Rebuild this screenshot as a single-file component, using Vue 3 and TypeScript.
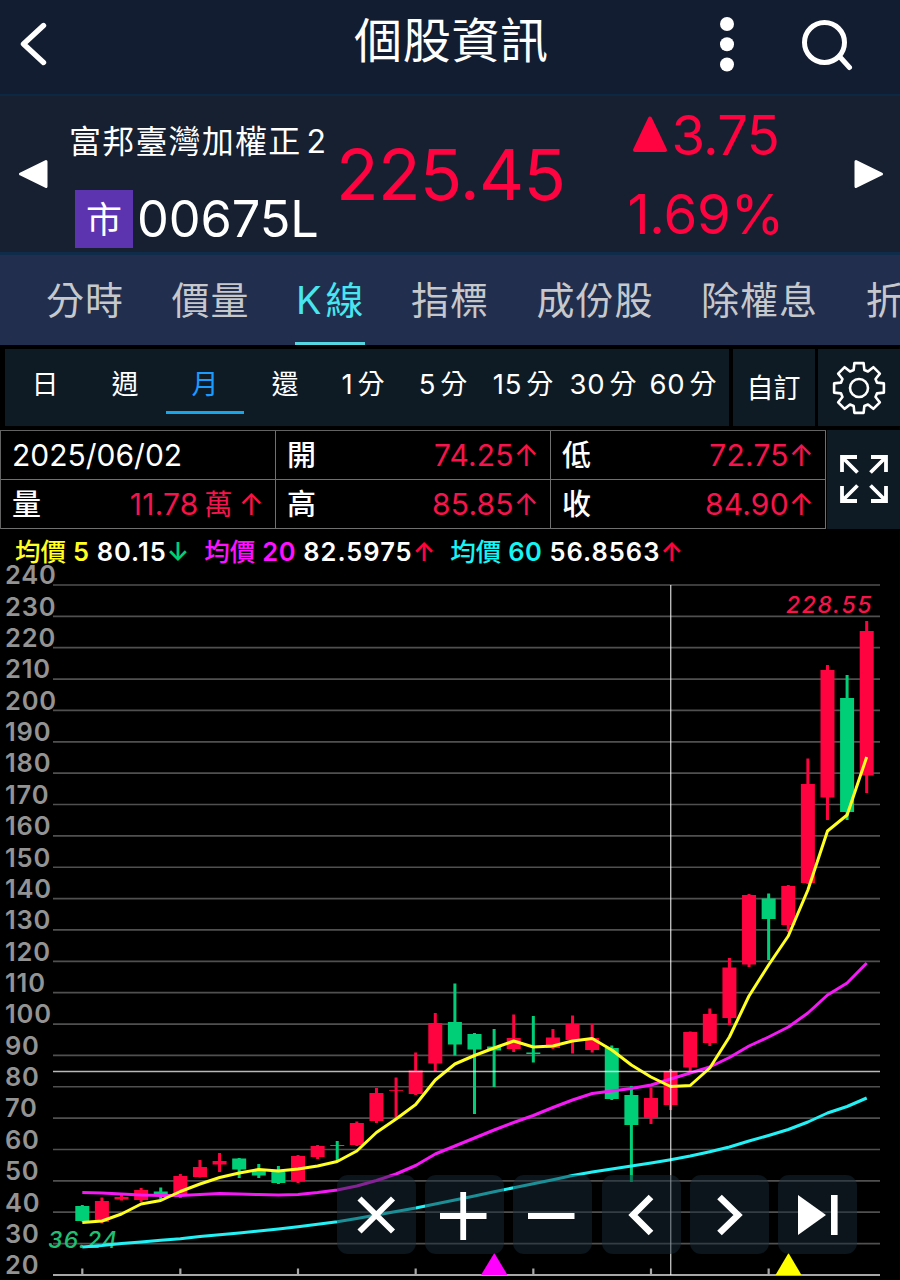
<script setup lang="ts">
type Tone = 'up' | 'down'
type Candle = [tone: Tone, high: number, top: number, bottom: number, low: number]

const tabs = [
  { lead: '', name: '分時' },
  { lead: '', name: '價量' },
  { lead: 'K', name: '線' },
  { lead: '', name: '指標' },
  { lead: '', name: '成份股' },
  { lead: '', name: '除權息' },
  { lead: '', name: '折溢價' },
]
const activeTab = '線'

const periods = [
  { num: '', unit: '日' },
  { num: '', unit: '週' },
  { num: '', unit: '月' },
  { num: '', unit: '還' },
  { num: '1', unit: '分' },
  { num: '5', unit: '分' },
  { num: '15', unit: '分' },
  { num: '30', unit: '分' },
  { num: '60', unit: '分' },
]
const activePeriod = '月'

const averages = [
  { key: 'ma5', name: '均價', days: '5', value: '80.15', arrow: '↓', tone: 'down' },
  { key: 'ma20', name: '均價', days: '20', value: '82.5975', arrow: '↑', tone: 'up' },
  { key: 'ma60', name: '均價', days: '60', value: '56.8563', arrow: '↑', tone: 'up' },
]

// Chart geometry
const top = 585
const rowGap = 31.36
const levels = Array.from({ length: 23 }, (_, i) => ({ label: 240 - i * 10, y: top + i * rowGap }))
const cx = (i: number) => 82.3 + i * 19.61
const ticks = [0, 5, 11, 17, 23, 29, 35]

const candles: Candle[] = [
  ['down', 1205, 1206, 1221, 1221.5],
  ['up', 1197.5, 1201, 1222, 1223.5],
  ['up', 1195, 1197, 1199.5, 1200.5],
  ['up', 1188, 1190, 1200, 1202],
  ['down', 1187.5, 1191.5, 1195, 1199],
  ['up', 1174, 1176, 1196, 1198],
  ['up', 1160, 1167, 1177, 1177.5],
  ['up', 1153, 1161, 1164.5, 1172],
  ['down', 1158, 1158.5, 1169.5, 1178],
  ['down', 1164, 1171, 1175.5, 1178],
  ['down', 1166, 1172, 1183, 1184],
  ['up', 1155, 1156, 1181.5, 1183],
  ['up', 1145, 1146, 1157, 1159],
  ['down', 1141, 1145, 1145.8, 1160],
  ['up', 1121.5, 1123, 1145, 1146],
  ['up', 1088, 1093, 1121, 1123],
  ['up', 1077.5, 1090, 1090.8, 1118],
  ['up', 1052.5, 1070.5, 1094, 1095],
  ['up', 1013, 1023, 1063.5, 1071],
  ['down', 983.5, 1022, 1044.5, 1055.5],
  ['down', 1033, 1034, 1049.5, 1114],
  ['down', 1029, 1046.5, 1050.5, 1087],
  ['up', 1014.5, 1038, 1049, 1052],
  ['down', 1016, 1052.5, 1054, 1062.5],
  ['up', 1029, 1037.5, 1048, 1049],
  ['up', 1015.5, 1024, 1040, 1053.5],
  ['up', 1024, 1038, 1050, 1052.5],
  ['down', 1045.5, 1048, 1099, 1100],
  ['down', 1086, 1095, 1125, 1182],
  ['up', 1087.5, 1098, 1118, 1124],
  ['up', 1069, 1071.5, 1105, 1110],
  ['up', 1031.5, 1032, 1067.5, 1071],
  ['up', 1008.5, 1014, 1043, 1046],
  ['up', 958, 967.5, 1018, 1025],
  ['up', 894, 895, 964.5, 967],
  ['down', 893.5, 898.5, 919, 960],
  ['up', 885, 886, 925, 932],
  ['up', 758.5, 784, 883, 884],
  ['up', 665, 670, 797.5, 820],
  ['down', 675, 698, 812, 820],
  ['up', 621, 631, 775.5, 793],
]

const series = [
  {
    key: 'ma60',
    ys: [1247, 1245.5, 1243.5, 1242, 1240.3, 1238.7, 1236.5, 1234.8, 1233, 1231, 1229, 1226.8, 1224.3, 1221.8, 1218.5, 1215, 1211.5, 1208, 1204, 1200, 1196, 1191.8, 1187.7, 1183.8, 1179.8, 1175.5, 1172, 1169, 1166, 1163, 1159.7, 1156, 1151.7, 1147, 1141, 1135.5, 1129.5, 1122, 1113, 1106.5, 1098],
  },
  {
    key: 'ma20',
    ys: [1192.5, 1193, 1194, 1195, 1195.5, 1195.5, 1194.5, 1193.5, 1194, 1194.5, 1195, 1194.5, 1192.5, 1190, 1186, 1180.5, 1174, 1165.5, 1154, 1146, 1138, 1130, 1122.5, 1115.5, 1107.5, 1100, 1093.5, 1091, 1088.5, 1085, 1079, 1073, 1067, 1057.5, 1046, 1037, 1027, 1013, 995, 983, 963],
  },
  {
    key: 'ma5',
    ys: [1222.5, 1221, 1214, 1204, 1200.5, 1191.5, 1184, 1177.5, 1173, 1169.5, 1171, 1169, 1166, 1161.5, 1151, 1132.5, 1119, 1104.5, 1080, 1064, 1055.5, 1048, 1041, 1047, 1046, 1041, 1038.5, 1050, 1065, 1077, 1086.5, 1085.5, 1068, 1037, 996, 965, 936, 890, 831, 815, 757],
  },
]
const points = (ys: number[]) => ys.map((y, i) => `${cx(i).toFixed(1)},${y}`).join(' ')

const controls = [
  { key: 'close', d: 'M22.5 23.5L56 56.5M56 23.5L22.5 56.5' },
  { key: 'plus', d: 'M15 41H61.5M38.2 17V65' },
  { key: 'minus', d: 'M15 41H61.5' },
  { key: 'prev', d: 'M49 22L31 40L49 58' },
  { key: 'next', d: 'M29.5 22L48 40L29.5 58' },
  { key: 'last', d: 'M56.3 20V60' },
]

// Gear outline: eight teeth around a centre of 27,27
const gear = Array.from({ length: 8 }, (_, t) =>
  [[-16.5, 18.8], [-10.5, 25.3], [10.5, 25.3], [16.5, 18.8]]
    .map(([a, r]) => {
      const rad = ((t * 45 + a) * Math.PI) / 180
      return `${(27 + r * Math.sin(rad)).toFixed(2)},${(27 - r * Math.cos(rad)).toFixed(2)}`
    })
    .join(' '),
).join(' ')
</script>

<template>
  <main class="screen">
    <header class="header">
      <svg class="back" viewBox="0 0 30 48" width="30" height="48"><path d="M23.5 5.5L3.5 24L23.5 42.5" /></svg>
      <h1 class="title">個股資訊</h1>
      <svg class="more" viewBox="0 0 16 56" width="16" height="56">
        <circle cx="8" cy="8" r="7" /><circle cx="8" cy="28.3" r="7" /><circle cx="8" cy="48.5" r="7" />
      </svg>
      <svg class="search" viewBox="0 0 52 52" width="52" height="52">
        <circle cx="23.5" cy="23.5" r="20" /><path d="M39 38L48.5 48.5" />
      </svg>
    </header>

    <section class="quote">
      <svg class="nav" viewBox="0 0 30 30" width="30" height="30"><path d="M28 2.5L2.5 15L28 27.5Z" /></svg>
      <div class="stock">
        <div class="name">富邦臺灣加權正<span>2</span></div>
        <div class="code"><b>市</b><span>00675L</span></div>
      </div>
      <div class="price">225.45</div>
      <div class="change">
        <div class="diff">
          <svg viewBox="0 0 36 38" width="36" height="38"><path d="M18 3.5L33 35H3Z" /></svg><span>3.75</span>
        </div>
        <div class="pct">1.69%</div>
      </div>
      <svg class="nav" viewBox="0 0 30 30" width="30" height="30"><path d="M2 2.5L27.5 15L2 27.5Z" /></svg>
    </section>

    <nav class="tabs">
      <div v-for="t in tabs" :key="t.name" class="tab" :class="{ active: t.name === activeTab }">
        <span v-if="t.lead" class="lead">{{ t.lead }}</span>{{ t.name }}
      </div>
    </nav>

    <div class="toolbar">
      <div class="periods">
        <div v-for="(p, i) in periods" :key="i" class="period" :class="{ active: p.unit === activePeriod }">
          <span v-if="p.num" class="num">{{ p.num }}</span>{{ p.unit }}
        </div>
      </div>
      <div class="custom">自訂</div>
      <div class="settings">
        <svg viewBox="0 0 54 54" width="54" height="54"><polygon :points="gear" /><circle cx="27" cy="27" r="9" /></svg>
      </div>
    </div>

    <section class="info">
      <div class="table">
        <div class="cell date"><span>2025/06/02</span></div>
        <div class="cell"><b>開</b><em>74.25↑</em></div>
        <div class="cell"><b>低</b><em>72.75↑</em></div>
        <div class="cell"><b>量</b><em class="volume">11.78<i>萬</i>↑</em></div>
        <div class="cell"><b>高</b><em>85.85↑</em></div>
        <div class="cell"><b>收</b><em>84.90↑</em></div>
      </div>
      <div class="expand">
        <svg viewBox="0 0 50 50" width="50" height="50">
          <path d="M3 18V3H18M3 3L18.5 18.5M32 3H47V18M47 3L31.5 18.5M3 32V47H18M3 47L18.5 31.5M47 32V47H32M47 47L31.5 31.5" />
        </svg>
      </div>
    </section>

    <div class="legend">
      <div v-for="m in averages" :key="m.key" class="average" :class="m.key">
        <span class="ma-name">{{ m.name }}</span><span class="ma-days">{{ m.days }}</span>
        <span class="ma-value">{{ m.value }}</span><span class="ma-arrow" :class="m.tone">{{ m.arrow }}</span>
      </div>
    </div>

    <section class="chart">
      <svg class="plot" viewBox="0 574 900 706" width="900" height="706">
        <g class="grid">
          <line v-for="l in levels" :key="l.label" x1="53" x2="880" :y1="l.y" :y2="l.y" />
        </g>
        <g class="axis">
          <line x1="53" x2="880" y1="1275" y2="1275" />
          <line v-for="t in ticks" :key="t" :x1="cx(t)" :x2="cx(t)" y1="1268.5" y2="1275" />
        </g>
        <g class="labels">
          <text v-for="l in levels" :key="l.label" x="5" :y="l.y - 0.7">{{ l.label }}</text>
        </g>
        <g v-for="(c, i) in candles" :key="i" :class="c[0]">
          <rect :x="cx(i) - 1.5" :y="c[1]" width="3" :height="c[4] - c[1]" />
          <rect :x="cx(i) - 7" :y="c[2]" width="14" :height="c[3] - c[2]" />
        </g>
        <text class="extreme high" x="786" y="613">228.55</text>
        <text class="extreme low" x="48" y="1248">36.24</text>
        <polyline v-for="s in series" :key="s.key" class="series" :class="s.key" :points="points(s.ys)" />
        <path class="flag-magenta" d="M494.3 1253L507.5 1275H481Z" />
        <path class="flag-yellow" d="M788.5 1253L801.5 1275H775.5Z" />
        <g class="cross">
          <line x1="670.7" x2="670.7" y1="585" y2="1275" /><line x1="53" x2="880" y1="1071.5" y2="1071.5" />
        </g>
      </svg>
      <div class="controls">
        <button v-for="c in controls" :key="c.key" :class="c.key">
          <svg viewBox="0 0 79 79" width="79" height="79">
            <path class="glyph" :d="c.d" />
            <path v-if="c.key === 'last'" class="solid" d="M20 20L48 40L20 60Z" />
          </svg>
        </button>
      </div>
    </section>
  </main>
</template>

<style>
body {
  margin: 0;
  background: #000;
}
</style>

<style scoped>
.screen {
  width: 900px;
  height: 1280px;
  overflow: hidden;
  background: #000;
  color: #fff;
  font-family: Inter, "Noto Sans CJK TC", sans-serif;
  line-height: 1;
}
svg {
  display: block;
}
.header {
  display: grid;
  grid-template-columns: 355px 364px 82px 99px;
  height: 94px;
  background: #131d31;
}
.back {
  margin: 20px 0 0 20px;
  fill: none;
  stroke: #fff;
  stroke-width: 5.4;
  stroke-linecap: round;
  stroke-linejoin: round;
}
.title {
  margin: 17px 0 0 -1px;
  font-size: 48px;
  font-weight: 400;
  letter-spacing: 0.7px;
}
.more {
  margin-top: 16px;
  fill: #fff;
}
.search {
  margin: 19px 0 0;
  fill: none;
  stroke: #fff;
  stroke-width: 5;
  stroke-linecap: round;
}
.quote {
  display: grid;
  grid-template-columns: 49px 267px 294px 244px 46px;
  height: 161px;
  box-sizing: border-box;
  background: #162030;
  border-top: 2px solid #0d2843;
  border-bottom: 3px solid #0f2d4a;
}
.nav {
  margin-top: 63px;
  fill: #fff;
  stroke: #fff;
  stroke-width: 3;
  stroke-linejoin: round;
}
.quote .nav:first-child {
  margin-left: 18px;
}
.stock {
  padding-left: 20px;
}
.name {
  margin-top: 29px;
  font-size: 32px;
  letter-spacing: 1.2px;
  line-height: 34px;
  white-space: nowrap;
}
.name span {
  margin-left: 5px;
}
.code {
  display: flex;
  align-items: center;
  margin: 30px 0 0 6px;
}
.code b {
  flex: none;
  width: 58px;
  height: 58px;
  background: #5d34b0;
  font-size: 36px;
  font-weight: 400;
  line-height: 60px;
  text-align: center;
}
.code span {
  margin-left: 4px;
  font-size: 50.5px;
  letter-spacing: -0.1px;
  line-height: 60px;
}
.price {
  margin: 44px 0 0 20px;
  color: #ff0340;
  font-size: 70px;
  letter-spacing: -0.8px;
}
.change {
  width: 171px;
  color: #ff0340;
  font-size: 54.5px;
  letter-spacing: -0.8px;
  text-align: right;
}
.diff {
  display: flex;
  justify-content: flex-end;
  margin: 12px 2px 0 0;
}
.diff svg {
  margin-top: 7px;
  fill: #ff0340;
  stroke: #ff0340;
  stroke-width: 4;
  stroke-linejoin: round;
}
.diff span {
  margin-left: 3px;
}
.pct {
  margin: 24px -3px 0 -10px;
  letter-spacing: -0.2px;
}
.tabs {
  display: flex;
  gap: 47.5px;
  height: 90px;
  padding-left: 46px;
  overflow: hidden;
  background: #212e4d;
}
.tab {
  flex: none;
  height: 87px;
  border-bottom: 3px solid transparent;
  color: #c6c8cb;
  font-size: 38px;
  line-height: 90px;
  letter-spacing: 1px;
}
.tab .lead {
  margin: 0 3px 0 1px;
}
.tab.active {
  margin: 0 -1px 0 -2px;
  color: #48e6f0;
  border-color: #54d5e0;
}
.toolbar {
  display: flex;
  gap: 3.5px;
  height: 77px;
  padding: 4px 0 4px 5px;
}
.periods {
  display: grid;
  grid-template-columns: repeat(9, 80px);
  width: 724px;
  background: #0f1b24;
}
.period {
  width: 78px;
  height: 62px;
  margin-left: 1px;
  border-bottom: 3px solid transparent;
  font-size: 27px;
  line-height: 71px;
  text-align: center;
  white-space: nowrap;
}
.period .num {
  margin: 0 4px 0 -4px;
  font-size: 27.5px;
  letter-spacing: 0.9px;
}
.period.active {
  color: #1a9bff;
  border-color: #17a6ea;
}
.custom {
  width: 82px;
  background: #0f1b24;
  font-size: 27px;
  line-height: 80px;
  text-align: center;
}
.settings {
  flex: 1;
  background: #0f1b24;
}
.settings svg {
  margin: 12px 0 0 14px;
  fill: none;
  stroke: #fff;
  stroke-width: 2.6;
  stroke-linejoin: round;
}
.info {
  display: flex;
  height: 99px;
}
.table {
  display: grid;
  grid-template-columns: 275px 275px 275px;
  grid-template-rows: 49px 49px;
  width: 826px;
  box-sizing: border-box;
  border-left: 1px solid #636363;
  border-top: 1px solid #636363;
}
.cell {
  display: flex;
  justify-content: space-between;
  padding: 0 11px 0 11px;
  border-right: 1px solid #707070;
  border-bottom: 1px solid #707070;
  font-size: 30px;
  line-height: 49px;
}
.cell b {
  font-size: 29px;
  font-weight: 500;
  line-height: 50px;
}
.cell em {
  color: #f5144b;
  font-style: normal;
  letter-spacing: 0.2px;
}
.cell i {
  margin: 0 6px;
  font-size: 28px;
  font-style: normal;
}
.expand {
  flex: 1;
  margin-left: 1px;
  background: #0f1b24;
}
.expand svg {
  margin: 24px 0 0 12px;
  fill: none;
  stroke: #fff;
  stroke-width: 3.8;
}
.legend {
  display: flex;
  height: 45px;
  padding-left: 15px;
  font-size: 25.5px;
  font-weight: 500;
  line-height: 46px;
}
.average {
  display: flex;
  margin-right: 15px;
}
.ma-days {
  margin: 0 7px 0 7px;
  font-weight: 600;
  letter-spacing: 0.6px;
}
.ma-value {
  color: #fff;
  font-weight: 600;
  letter-spacing: 1px;
}
.average.ma5 {
  color: #ffff22;
}
.average.ma20 {
  color: #ff10ff;
}
.average.ma60 {
  color: #16f4f4;
}
.ma-arrow {
  font-weight: 600;
}
.ma-arrow.up {
  color: #ff0340;
}
.ma-arrow.down {
  color: #00cf78;
}
.chart {
  position: relative;
}
.plot {
  overflow: visible;
}
.grid line {
  stroke: #505050;
  stroke-width: 1.7;
}
.axis line {
  stroke: #a8a8a8;
  stroke-width: 2.2;
}
.labels text {
  fill: #939393;
  font-size: 25.5px;
  font-weight: 600;
  letter-spacing: 0.8px;
}
g.up {
  fill: #ff0340;
}
g.down {
  fill: #00cf78;
}
.extreme {
  font-size: 23px;
  font-style: italic;
  font-weight: 500;
  letter-spacing: 1.6px;
}
.extreme.high {
  fill: #f5144b;
}
.extreme.low {
  fill: #20c073;
  letter-spacing: 1.3px;
}
.series {
  fill: none;
  stroke-width: 3;
  stroke-linejoin: round;
}
.series.ma5 {
  stroke: #ffff22;
}
.series.ma20 {
  stroke: #f51af5;
}
.series.ma60 {
  stroke: #22f2f5;
}
.flag-magenta {
  fill: #ff00ff;
}
.flag-yellow {
  fill: #ffff00;
}
.cross line {
  stroke: rgba(255, 255, 255, 0.72);
  stroke-width: 1.4;
}
.controls {
  position: absolute;
  left: 337px;
  top: 601px;
  display: flex;
  gap: 9.2px;
}
.controls button {
  width: 79px;
  height: 79px;
  padding: 0;
  border: 0;
  border-radius: 11px;
  background: rgba(21, 42, 54, 0.5);
}
.glyph {
  fill: none;
  stroke: #fff;
  stroke-width: 5.8;
}
.prev .glyph,
.next .glyph,
.last .glyph {
  stroke-width: 6.6;
}
.solid {
  fill: #fff;
}
</style>
